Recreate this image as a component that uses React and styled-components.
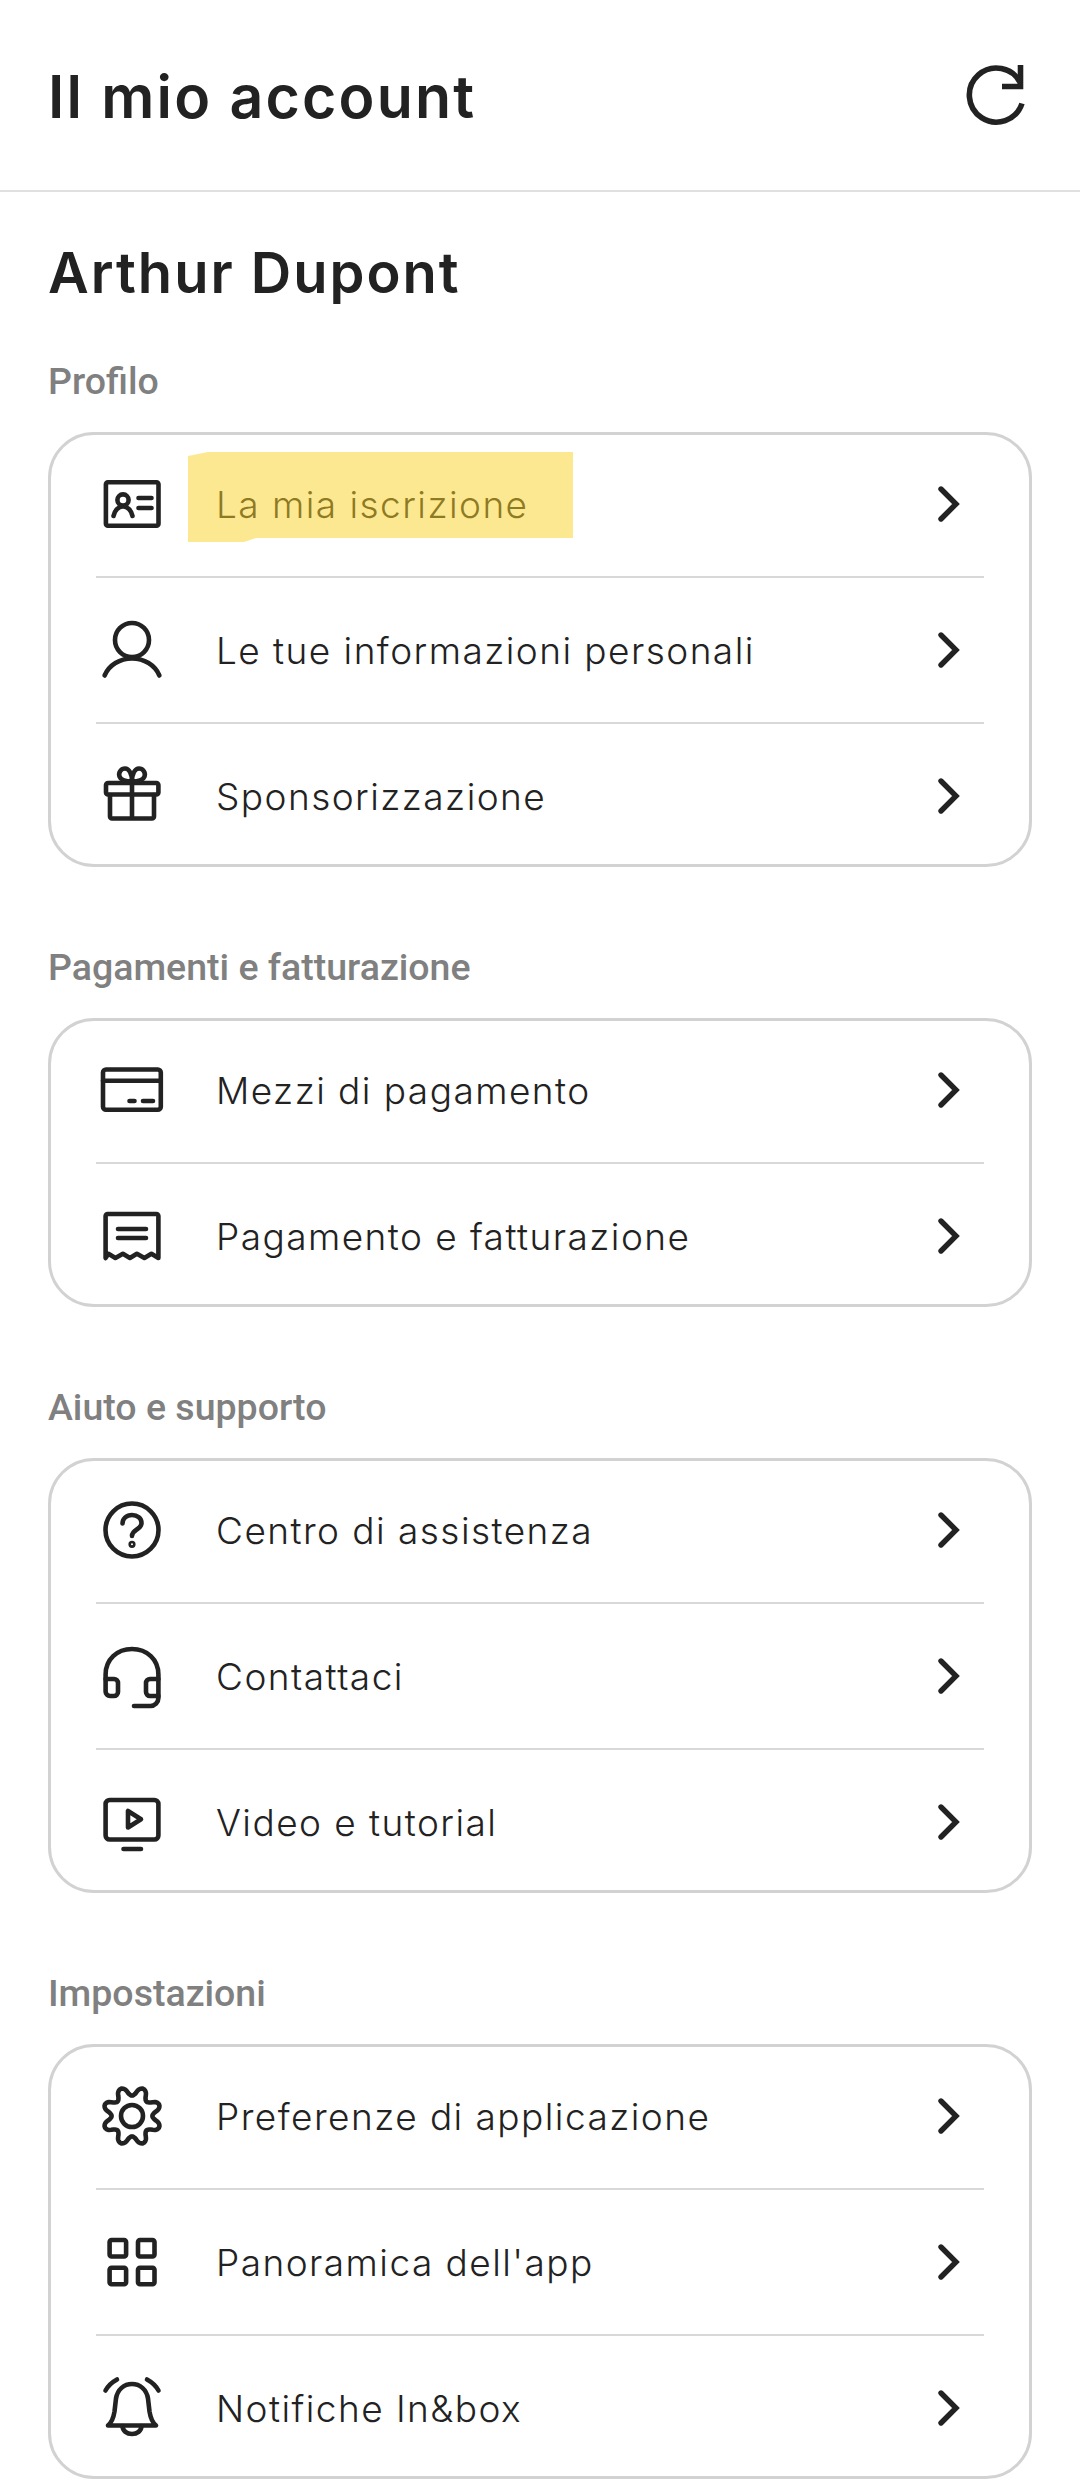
import React from "react";
import styled, { createGlobalStyle } from "styled-components";

const Global = createGlobalStyle`
  html, body { margin: 0; padding: 0; background: #fff; }
  body { font-family: "Inter", "Liberation Sans", sans-serif; color: #222; }
`;

const Page = styled.div`
  width: 1080px;
  height: 2491px;
  overflow: hidden;
  background: #fff;
`;

const Header = styled.header`
  height: 190px;
  box-sizing: content-box;
  border-bottom: 2px solid #e0e0e0;
  display: flex;
  align-items: center;
  justify-content: space-between;
  padding: 0 49px 0 48px;
`;

const Title = styled.h1`
  margin: 2px 0 0;
  font-size: 59px;
  font-weight: 560;
  letter-spacing: 2.2px;
  color: #222;
`;

const Main = styled.main`
  padding: 0 48px;
`;

const Name = styled.h2`
  margin: 46px 0 0;
  font-size: 56px;
  line-height: 70px;
  font-weight: 560;
  letter-spacing: 2px;
  color: #222;
`;

const Section = styled.section`
  margin-top: ${(p) => p.$gap}px;
`;

const Label = styled.h3`
  margin: 0 0 29px;
  font-family: "Roboto", sans-serif;
  font-size: 37.5px;
  line-height: 44px;
  font-weight: 500;
  color: #808080;
`;

const Card = styled.div`
  border: 3px solid #d2d2d2;
  border-radius: 46px;
  padding: 0 45px;
`;

const Row = styled.div`
  position: relative;
  height: 144px;
  display: flex;
  align-items: center;
  padding: 0 0 0 6px;
  & + & { border-top: 2px solid #d8d8d8; }
  &:first-child { margin-top: -3px; }
  &:last-child { margin-bottom: -4px; }
`;

const IconBox = styled.svg`
  width: 60px;
  height: 60px;
  flex: none;
  overflow: visible;
  fill: none;
  stroke: #222;
  stroke-width: 4.6;
  stroke-linecap: round;
  stroke-linejoin: round;
`;

const RowText = styled.span`
  margin-left: 54px;
  flex: 1;
  font-size: 37px;
  font-weight: 300;
  letter-spacing: 1.45px;
  color: #222;
`;

const Chevron = styled.svg`
  width: 40px;
  height: 40px;
  flex: none;
  margin-right: 14px;
  fill: none;
  stroke: #222;
  stroke-width: 5.4;
  stroke-linecap: round;
  stroke-linejoin: miter;
`;

const Highlight = styled.div`
  position: absolute;
  left: 92px;
  top: 20px;
  width: 385px;
  height: 90px;
  background: rgba(251, 209, 37, 0.5);
  clip-path: polygon(0 4px, 20px 0, 100% 0, 100% 86px, 68px 86px, 56px 90px, 0 90px);
`;

const RefreshIcon = styled.svg`
  width: 70px;
  height: 70px;
  flex: none;
  fill: none;
  stroke: #222;
  stroke-width: 5.6;
`;

const gearPath = (() => {
  const pts = [];
  for (let i = 0; i < 160; i++) {
    const t = (i / 160) * Math.PI * 2;
    const c = Math.cos(8 * t);
    const shaped = Math.sign(c) * Math.pow(Math.abs(c), 0.75);
    const r = 24.9 - 4.5 * shaped;
    pts.push(`${(30 + r * Math.sin(t)).toFixed(2)} ${(30 - r * Math.cos(t)).toFixed(2)}`);
  }
  return `M${pts.join("L")}Z`;
})();

const icons = {
  id: (
    <>
      <rect x="3.9" y="8.3" width="52.6" height="43.4" rx="2" />
      <circle cx="21" cy="26" r="5.6" />
      <path d="M11.5 42c1-5.5 5-9.5 9.5-9.5s8.5 4 9.5 9.5M36.5 24h13M36.5 34h13" />
    </>
  ),
  user: (
    <>
      <circle cx="30" cy="20" r="17" />
      <path d="M2.6 55.5C7 45 18 38.5 30 38.5S53 45 57.4 55.5" />
    </>
  ),
  gift: (
    <>
      <rect x="4" y="17" width="52.4" height="11.5" rx="2" />
      <path d="M8 29v21.5a2 2 0 0 0 2 2h40a2 2 0 0 0 2-2V29M30 17v35.5" />
      <path d="M30 15.5C26 15.5 19 15 17.5 10.5 16 6 19.5 2.5 23 2.5c4 0 7 5 7 13zM30 15.5c4 0 11-.5 12.5-5 1.500-4.500-2-8-5.500-8-4 0-7 5-7 13z" />
    </>
  ),
  card: (
    <>
      <rect x="1" y="9.500" width="57.800" height="40.200" rx="3" />
      <path d="M1 20.700h57.800M27.500 41h5M41 41h10" />
    </>
  ),
  receipt: (
    <>
      <path d="M3.600 52V10a2 2 0 0 1 2-2h48.800a2 2 0 0 1 2 2v42l-7-4.200-7 4.200-7.500-4.200-7 4.200-7-4.200-7.500 4.200-7-4.200z" />
      <path d="M16 23h28M16 32h28" />
    </>
  ),
  help: (
    <>
      <circle cx="30" cy="30" r="26.500" />
      <path d="M20.500 23.500c0-5 4-8.500 9.500-8.500s9.500 3.500 9.500 8c0 7-9.500 6-9.500 13" />
      <circle cx="30" cy="44.300" r="1.300" />
    </>
  ),
  headset: (
    <>
      <path d="M3.600 33v-4.500C3.600 13.500 15 3 30 3s26.400 10.500 26.400 25.500V52a8 8 0 0 1-8 8H32" />
      <path d="M3.600 33H12a4 4 0 0 1 4 4v9a4 4 0 0 1-4 4H8a4.400 4.400 0 0 1-4.400-4.400V33zM56.400 33H48a4 4 0 0 0-4 4v9a4 4 0 0 0 4 4h8.400" />
    </>
  ),
  video: (
    <>
      <rect x="3.600" y="8" width="52.800" height="39.500" rx="4" />
      <path d="M26 19v16.500l13-8.200zM21.500 57h17.500" />
    </>
  ),
  gear: (
    <>
      <path d={gearPath} />
      <circle cx="30" cy="30" r="11" />
    </>
  ),
  grid: (
    <>
      <rect x="7.600" y="8" width="16.500" height="16.500" rx="2" />
      <rect x="36" y="8" width="16.500" height="16.500" rx="2" />
      <rect x="7.600" y="35.800" width="16.500" height="16.500" rx="2" />
      <rect x="36" y="35.800" width="16.500" height="16.500" rx="2" />
    </>
  ),
  bell: (
    <>
      <path d="M3.500 12.500C6 8 9.500 4.500 15 1.500M56.500 12.500C54 8 50.500 4.500 45 1.500" />
      <path d="M6 47.500c3.500-3 5.500-7.500 6.500-14l1.500-13C15.500 11.500 22 6 30 6s14.500 5.500 16 14.500l1.500 13c1 6.500 3 11 6.500 14z" />
      <path d="M20.500 48c0 5 4.500 8 9.500 8s9.500-3 9.500-8" />
    </>
  ),
};

const sections = [
  { label: "Profilo", gap: 51, rows: [["id", "La mia iscrizione", true], ["user", "Le tue informazioni personali"], ["gift", "Sponsorizzazione"]] },
  { label: "Pagamenti e fatturazione", gap: 78, rows: [["card", "Mezzi di pagamento"], ["receipt", "Pagamento e fatturazione"]] },
  { label: "Aiuto e supporto", gap: 78, rows: [["help", "Centro di assistenza"], ["headset", "Contattaci"], ["video", "Video e tutorial"]] },
  { label: "Impostazioni", gap: 78, rows: [["gear", "Preferenze di applicazione"], ["grid", "Panoramica dell'app"], ["bell", "Notifiche In&box"]] },
];

export default function App() {
  return (
    <Page>
      <Global />
      <Header>
        <Title>Il mio account</Title>
        <RefreshIcon viewBox="0 0 70 70">
          <path d="M61 43.500A27 27 0 1 1 59.500 23" />
          <path d="M59.500 5v21.500H41" />
        </RefreshIcon>
      </Header>
      <Main>
        <Name>Arthur Dupont</Name>
        {sections.map((s) => (
          <Section key={s.label} $gap={s.gap}>
            <Label>{s.label}</Label>
            <Card>
              {s.rows.map(([icon, text, marked]) => (
                <Row key={text}>
                  <IconBox viewBox="0 0 60 60">{icons[icon]}</IconBox>
                  <RowText>{text}</RowText>
                  <Chevron viewBox="0 0 40 40">
                    <path d="M11 5l15 15-15 15" />
                  </Chevron>
                  {marked && <Highlight />}
                </Row>
              ))}
            </Card>
          </Section>
        ))}
      </Main>
    </Page>
  );
}
